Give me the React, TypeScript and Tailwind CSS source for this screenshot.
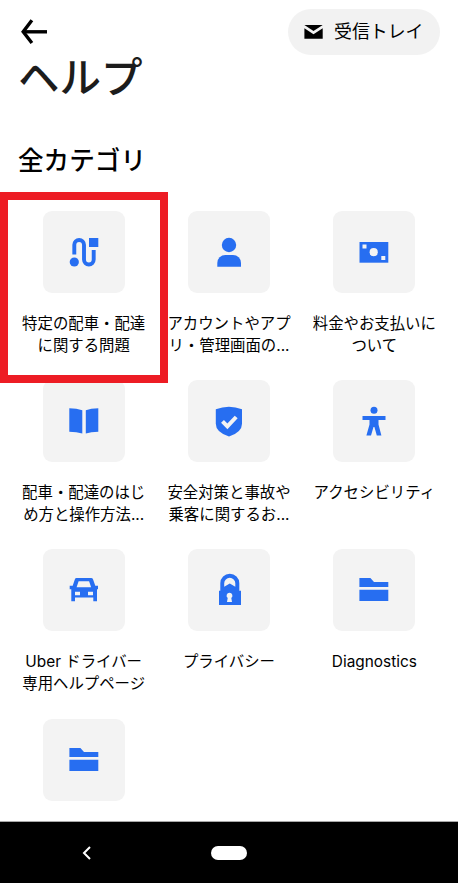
import type { ReactNode } from "react";

interface Category {
  id: string;
  lines: string[];
  icon: ReactNode;
}

function RouteIcon() {
  return (
    <>
      <path
        d="M31.3 43.5V33.8a4.85 4.85 0 0 1 9.7 0v14.8a4.85 4.85 0 0 0 9.7 0V39"
        fill="none"
        stroke="currentColor"
        strokeWidth="3.9"
      />
      <circle cx="31.3" cy="51" r="4.6" />
      <path d="M46 27h9.3v9H46z" />
    </>
  );
}

function PersonIcon() {
  return (
    <>
      <circle cx="41" cy="34" r="7.2" />
      <path d="M29.3 55.7V52a8 8 0 0 1 8-8H45a8 8 0 0 1 8 8v3.7z" />
    </>
  );
}

function CashIcon() {
  return (
    <>
      <path d="M26.5 31h28.8v20.7H26.5z" />
      <g fill="#f3f3f3">
        <circle cx="40.7" cy="41.2" r="4.1" />
        <path d="M29.5 33.5h4v4h-4zM48.3 45h4v4h-4z" />
      </g>
    </>
  );
}

function BookIcon() {
  return (
    <path d="M26.3 28.3q7.5 0 13 2v23.2q-5.5-1.7-13-1.7zM55.3 28.3q-7.5 0-12.5 2v23.2q5-1.7 12.5-1.7z" />
  );
}

function ShieldIcon() {
  return (
    <>
      <path d="M27.8 29.2q13.2-5 26.2 0v14.5q0 8.5-13 12.8-13.2-4.3-13.2-12.8z" />
      <path
        d="m34.5 41.3 4.9 5.1 8.8-9.4"
        fill="none"
        stroke="#f3f3f3"
        strokeWidth="4"
      />
    </>
  );
}

function AccessibilityIcon() {
  return (
    <>
      <circle cx="41" cy="30.3" r="3.5" />
      <path d="M29.5 36h23v4h-7v4.5l2.9 10.9h-4.600L41.400 47h-.9l-2.500 8.400h-4.600l3.100-10.900V40h-7z" />
    </>
  );
}

function CarIcon() {
  return (
    <path
      fillRule="evenodd"
      d="M33.6 29h14.5q1.5 0 2 1.400l2.200 6.300H55v3.600h-1v12h-3.700v-3.700H32v3.700h-3.700v-12h-1.600v-3.600h3L31.800 30.400q.4-1.400 1.800-1.400zM35.600 32.300 33.600 38.300h14.500l-2-6zM32 42.800v3.400h5v-3.400zM45 42.800v3.400h5v-3.400z"
    />
  );
}

function LockIcon() {
  return (
    <path
      fillRule="evenodd"
      d="M31 41.700h1.300v-7.500a9.500 9.500 0 0 1 19 0v7.500H53V56H31zM36.200 37.800l5.600-3.200 5.500 3.200v-3.500a5.550 5.550 0 0 0-11.100 0zM41.500 43.700a2.900 2.900 0 0 0-1.800 5.200l-.7 4.100h5l-.7-4.100a2.900 2.900 0 0 0-1.800-5.200z"
    />
  );
}

function FolderIcon() {
  return (
    <path d="M26.400 29h11l3.600 4h14.300v5H26.400zM26.400 40.800h28.900V52H26.400z" />
  );
}

const CATEGORIES: Category[] = [
  { id: "trip", lines: ["特定の配車・配達", "に関する問題"], icon: <RouteIcon /> },
  { id: "account", lines: ["アカウントやアプ", "リ・管理画面の..."], icon: <PersonIcon /> },
  { id: "payment", lines: ["料金やお支払いに", "ついて"], icon: <CashIcon /> },
  { id: "guide", lines: ["配車・配達のはじ", "め方と操作方法..."], icon: <BookIcon /> },
  { id: "safety", lines: ["安全対策と事故や", "乗客に関するお..."], icon: <ShieldIcon /> },
  { id: "accessibility", lines: ["アクセシビリティ"], icon: <AccessibilityIcon /> },
  { id: "driver", lines: ["Uber ドライバー", "専用ヘルプページ"], icon: <CarIcon /> },
  { id: "privacy", lines: ["プライバシー"], icon: <LockIcon /> },
  { id: "diagnostics", lines: ["Diagnostics"], icon: <FolderIcon /> },
  { id: "other", lines: [], icon: <FolderIcon /> },
];

function CategoryCard({ lines, icon }: Category) {
  return (
    <button
      type="button"
      className="flex h-[169.2px] flex-col items-center text-center"
    >
      <span className="size-[82px] shrink-0 rounded-[9px] bg-[#f3f3f3] text-[#276ef1]">
        <svg viewBox="0 0 82 82" className="size-full" fill="currentColor" aria-hidden="true">
          {icon}
        </svg>
      </span>
      <span className="mt-5 flex flex-col text-[15.4px] leading-[22px] whitespace-nowrap">
        {lines.map((line) => (
          <span key={line}>{line}</span>
        ))}
      </span>
    </button>
  );
}

export default function App() {
  return (
    <div className="relative flex h-[883px] w-[458px] flex-col overflow-hidden bg-white font-['Inter','Noto_Sans_CJK_JP',sans-serif] text-black">
      <header className="flex h-[46px] shrink-0 items-start justify-between pt-[9px] pr-[18px] pl-5">
        <button type="button" aria-label="戻る" className="mt-[10px]">
          <svg width="28" height="26" viewBox="0 0 28 26" fill="none" stroke="currentColor">
            <path d="M27 12.8H3.500" strokeWidth="3.4" />
            <path d="M11.900 1.300 3.200 12.800l8.700 11.200" strokeWidth="3.4" />
          </svg>
        </button>
        <button
          type="button"
          className="flex h-[46px] w-[152px] items-center rounded-full bg-[#f2f2f2] pl-4 text-[17.9px]"
        >
          <svg width="19" height="14" viewBox="0 0 19 14" className="mr-[11px] shrink-0" aria-hidden="true">
            <path d="M0.4 0h18.300L9.500 6z" />
            <path d="M0.4 3.200 9.500 9.300l9.200-6.100v10.500H0.400z" />
          </svg>
          <span className="whitespace-nowrap">受信トレイ</span>
        </button>
      </header>

      <main className="flex min-h-0 grow flex-col overflow-hidden">
        <h1 className="h-16 shrink-0 pl-[18px] text-[41.5px] leading-16 font-medium text-[#1c1c1c]">
          ヘルプ
        </h1>
        <h2 className="mt-[33px] h-9 shrink-0 pl-[18px] text-[25.6px] leading-9 font-medium">
          全カテゴリ
        </h2>
        <div className="mx-[11px] mt-8 grid grid-cols-3">
          {CATEGORIES.map((category) => (
            <CategoryCard key={category.id} {...category} />
          ))}
        </div>
      </main>

      <nav className="flex h-[62px] shrink-0 items-center border-t border-[#a8a8a8] bg-black pl-[82px] text-white">
        <svg width="9" height="14" viewBox="0 0 9 14" fill="none" stroke="currentColor" strokeWidth="2">
          <path d="M8 1 2 7l6 6" />
        </svg>
        <span className="ml-[120px] h-[14px] w-9 rounded-full bg-white" />
      </nav>

      <div
        aria-hidden="true"
        className="pointer-events-none absolute top-[192px] left-0 h-[191px] w-[168px] border-8 border-[#ed1c24]"
      />
    </div>
  );
}
